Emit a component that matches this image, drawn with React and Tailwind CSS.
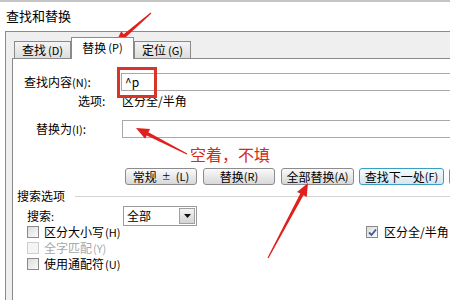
import React from 'react';

// red annotation arrows drawn over the dialog
const arrowPoints = (tail, tip, head = 13, half = 5.5, w0 = 0.6, w1 = 1.8) => {
  const dx = tip[0] - tail[0];
  const dy = tip[1] - tail[1];
  const len = Math.hypot(dx, dy);
  const ux = dx / len;
  const uy = dy / len;
  const nx = -uy;
  const ny = ux;
  const bx = tip[0] - ux * head;
  const by = tip[1] - uy * head;
  const pts = [
    [tail[0] + nx * w0, tail[1] + ny * w0],
    [bx + nx * w1, by + ny * w1],
    [bx + nx * half, by + ny * half],
    tip,
    [bx - nx * half, by - ny * half],
    [bx - nx * w1, by - ny * w1],
    [tail[0] - nx * w0, tail[1] - ny * w0],
  ];
  return pts.map((p) => p.join(',')).join(' ');
};

const Tab = ({ label, k, active }) => (
  <div
    className={
      active
        ? 'relative z-10 -mb-px flex h-[22px] w-[63px] items-start justify-center border border-b-0 border-[#8a8a8a] bg-white pt-[4px] text-[12px]'
        : 'flex h-[17px] w-[57px] items-center justify-center border border-b-0 border-[#8a8a8a] bg-gradient-to-b from-[#f4f4f4] to-[#dedede] text-[12px]'
    }
  >
    {label}
    <span className="ml-[2px] text-[11px]">({k})</span>
  </div>
);

const Btn = ({ children, w, focus }) => (
  <div
    className={`flex h-[17px] ${w} shrink-0 items-center justify-center rounded-[3px] border ${
      focus ? 'border-[#3a9fc4] from-[#f6fbfd] to-[#d6e6ee]' : 'border-[#8c8c8c] from-[#fafafa] to-[#d8d8d8]'
    } bg-gradient-to-b text-[12px]`}
  >
    {children}
  </div>
);

const Check = ({ checked, disabled }) => (
  <div
    className={`flex h-[12px] w-[12px] shrink-0 items-center justify-center border ${
      disabled ? 'border-[#cfcfcf] bg-[#f4f4f4]' : 'border-[#8a8a8a] bg-gradient-to-br from-[#dcdcdc] to-[#fbfbfb]'
    }`}
  >
    {checked && (
      <svg width="9" height="9" viewBox="0 0 9 9">
        <path d="M1 4.5 L3.5 7 L8 1.5" fill="none" stroke="#3d5a93" strokeWidth="1.8" />
      </svg>
    )}
  </div>
);

export default function App() {
  return (
    <div className="relative h-[300px] w-[450px] overflow-hidden bg-white font-['Noto_Sans_CJK_SC',sans-serif] text-[12px] leading-none text-black">
      {/* title */}
      <div className="h-[31px] border-t-2 border-[#c4c4c4] pl-[6px] pt-[7px] text-[13px]">查找和替换</div>

      <div className="flex h-[269px]">
        <div className="w-[5px] shrink-0" />
        <div className="flex flex-1 flex-col border-l border-t border-[#8a8a8a] bg-[#efefef]">
          {/* tab strip */}
          <div className="flex h-[26px] items-end pl-[8px]">
            <Tab label="查找" k="D" />
            <Tab label="替换" k="P" active />
            <Tab label="定位" k="G" />
          </div>

          {/* tab page */}
          <div className="ml-[6px] flex flex-1 flex-col border-l border-t border-[#8a8a8a] bg-white">
            <div className="mt-[14px] flex h-[18px] items-center">
              <div className="w-[108px] shrink-0 pl-[11px]">
                查找内容<span className="text-[11px]">(N)</span>:
              </div>
              <div className="flex h-[18px] flex-1 items-center border border-[#a8a8a8] pl-[3px] text-[12px]">^p</div>
            </div>

            <div className="mt-[3px] flex h-[14px] items-center">
              <div className="w-[109px] shrink-0 pl-[65px]">选项:</div>
              <div>区分全/半角</div>
            </div>

            <div className="mt-[12px] flex h-[18px] items-center">
              <div className="w-[109px] shrink-0 pl-[23px]">
                替换为<span className="text-[11px]">(I)</span>:
              </div>
              <div className="h-[18px] flex-1 border border-[#a8a8a8]" />
            </div>

            <div className="mt-[30px] flex items-center pl-[112px]">
              <Btn w="w-[72px]">
                常规 <span className="mx-[5px] text-[9px]">±</span>
                <span className="text-[11px]">(L)</span>
              </Btn>
              <div className="w-[6px] shrink-0" />
              <Btn w="w-[72px]">
                替换<span className="text-[11px]">(R)</span>
              </Btn>
              <div className="w-[6px] shrink-0" />
              <Btn w="w-[73px]">
                全部替换<span className="text-[11px]">(A)</span>
              </Btn>
              <div className="w-[5px] shrink-0" />
              <Btn w="w-[85px]" focus>
                查找下一处<span className="text-[11px]">(F)</span>
              </Btn>
              <div className="w-[5px] shrink-0" />
              <Btn w="w-[30px]" />
            </div>

            <div className="mt-[4px] flex h-[14px] items-center pl-[4px]">
              <div>搜索选项</div>
              <div className="ml-[10px] h-px flex-1 bg-[#d4d4d4]" />
            </div>

            <div className="mt-[3px] flex h-[20px] items-center">
              <div className="w-[110px] shrink-0 pl-[14px]">
                搜索<span className="text-[11px]">:</span>
              </div>
              <div className="flex h-[20px] w-[74px] items-center border border-[#9a9a9a]">
                <div className="flex-1 pl-[3px]">全部</div>
                <div className="m-[1px] flex h-[16px] w-[16px] items-center justify-center border border-[#a0a0a0] bg-gradient-to-b from-[#f4f4f4] to-[#d4d4d4]">
                  <svg width="7" height="4" viewBox="0 0 7 4">
                    <path d="M0 0 H7 L3.5 4 Z" fill="#111" />
                  </svg>
                </div>
              </div>
            </div>

            <div className="-mt-[2px] flex h-[16px] items-center">
              <div className="flex w-[353px] shrink-0 items-center gap-[5px] pl-[14px]">
                <Check />
                <span>
                  区分大小写<span className="ml-[1px] text-[11px]">(H)</span>
                </span>
              </div>
              <div className="flex items-center gap-[6px]">
                <Check checked />
                <span className="whitespace-nowrap">区分全/半角</span>
              </div>
            </div>
            <div className="flex h-[16px] items-center gap-[5px] pl-[14px] text-[#a8a8a8]">
              <Check disabled />
              <span>
                全字匹配<span className="ml-[1px] text-[11px]">(Y)</span>
              </span>
            </div>
            <div className="flex h-[16px] items-center gap-[5px] pl-[14px]">
              <Check />
              <span>
                使用通配符<span className="ml-[1px] text-[11px]">(U)</span>
              </span>
            </div>
          </div>
        </div>
      </div>

      {/* annotations */}
      <div className="absolute left-[117px] top-[67px] h-[31px] w-[40px] border-[3px] border-[#d9342b]" />
      <div className="absolute left-[190px] top-[146px] text-[16px] leading-none text-[#d42a22]">空着，不填</div>
      <svg className="pointer-events-none absolute left-0 top-0" width="450" height="300">
        <polygon points={arrowPoints([151, 13], [115, 44])} fill="#e0201c" />
        <polygon points={arrowPoints([187, 154], [136, 128])} fill="#e0201c" />
        <polygon points={arrowPoints([268, 258], [308, 183])} fill="#e0201c" />
      </svg>
    </div>
  );
}
